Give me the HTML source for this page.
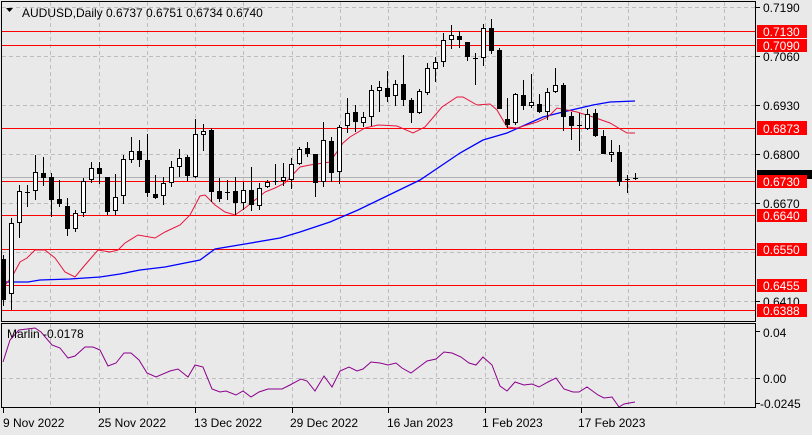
<!DOCTYPE html>
<html><head><meta charset="utf-8"><style>
html,body{margin:0;padding:0;background:#e9e9e9;}
svg{display:block;font-family:"Liberation Sans",sans-serif;}
</style></head><body>
<svg width="812" height="435" viewBox="0 0 812 435" xmlns="http://www.w3.org/2000/svg">
<rect x="0" y="0" width="812" height="435" fill="#e9e9e9"/>
<!-- grid -->
<g stroke="#bdbdbd" stroke-width="1" stroke-dasharray="4,3" shape-rendering="crispEdges">
<line x1="2" y1="7.5" x2="755" y2="7.5"/><line x1="2" y1="56.5" x2="755" y2="56.5"/><line x1="2" y1="105.5" x2="755" y2="105.5"/><line x1="2" y1="154.5" x2="755" y2="154.5"/><line x1="2" y1="203.5" x2="755" y2="203.5"/><line x1="2" y1="252.5" x2="755" y2="252.5"/><line x1="2" y1="301.5" x2="755" y2="301.5"/>
<line x1="2" y1="378.5" x2="755" y2="378.5"/>
<g>
<line x1="50.5" y1="2" x2="50.5" y2="407"/><line x1="99.5" y1="2" x2="99.5" y2="407"/><line x1="147.5" y1="2" x2="147.5" y2="407"/><line x1="195.5" y1="2" x2="195.5" y2="407"/><line x1="243.5" y1="2" x2="243.5" y2="407"/><line x1="292.5" y1="2" x2="292.5" y2="407"/><line x1="340.5" y1="2" x2="340.5" y2="407"/><line x1="388.5" y1="2" x2="388.5" y2="407"/><line x1="436.5" y1="2" x2="436.5" y2="407"/><line x1="485.5" y1="2" x2="485.5" y2="407"/><line x1="533.5" y1="2" x2="533.5" y2="407"/><line x1="581.5" y1="2" x2="581.5" y2="407"/><line x1="628.5" y1="2" x2="628.5" y2="407"/><line x1="676.5" y1="2" x2="676.5" y2="407"/><line x1="724.5" y1="2" x2="724.5" y2="407"/>
</g></g>
<!-- current price line -->
<line x1="2" y1="177.5" x2="755" y2="177.5" stroke="#b0b0b0" shape-rendering="crispEdges"/>
<!-- red levels -->
<g stroke="#ff0000" stroke-width="1" shape-rendering="crispEdges">
<line x1="2" y1="31.5" x2="755" y2="31.5"/><line x1="2" y1="45.5" x2="755" y2="45.5"/><line x1="2" y1="128.5" x2="755" y2="128.5"/><line x1="2" y1="181.5" x2="755" y2="181.5"/><line x1="2" y1="215.5" x2="755" y2="215.5"/><line x1="2" y1="249.5" x2="755" y2="249.5"/><line x1="2" y1="285.5" x2="755" y2="285.5"/><line x1="2" y1="310.5" x2="755" y2="310.5"/>
</g>
<!-- MAs -->
<polyline fill="none" stroke="#0000ff" stroke-width="1.3" points="2,282 28,282 40,280 70,279 100,277 120,274 140,270 165,267 200,260 215,249 245,244 280,238 300,232 330,222 358,210 420,180 460,153 483,140 507,133 543,117 563,112 593,105 610,102 635,101"/>
<polyline fill="none" stroke="#e8143c" stroke-width="1" points="3,288 13,275 20,262 27,258 35,250 45,250 55,258 65,272 75,277 85,265 98,250 110,252 118,250 125,243 138,235 155,238 165,232 180,225 190,215 200,196 205,195 215,205 225,212 235,215 245,208 255,200 265,192 275,188 285,183 300,167 310,165 330,162 343,143 350,137 365,128 378,125 397,126 413,133 425,127 442,107 457,97 463,97 477,105 490,104 497,110 507,127 517,128 537,122 548,117 557,108 577,112 593,117 610,123 627,133 635,133"/>
<!-- candles -->
<g stroke="#000" stroke-width="1" shape-rendering="crispEdges">
<g id="c">
<line x1="3.5" y1="255" x2="3.5" y2="306"/><rect x="1" y="259" width="5" height="41" fill="#000" stroke="none"/>
<line x1="11.5" y1="218" x2="11.5" y2="310"/><rect x="9.5" y="223.5" width="4" height="70" fill="#fff"/>
<line x1="19.5" y1="185" x2="19.5" y2="238"/><rect x="17.5" y="191.5" width="4" height="31" fill="#fff"/>
<line x1="27.5" y1="185" x2="27.5" y2="207"/><line x1="25" y1="192.5" x2="30" y2="192.5"/>
<line x1="35.5" y1="155" x2="35.5" y2="200"/><rect x="33.5" y="172.5" width="4" height="18" fill="#fff"/>
<line x1="43.5" y1="157" x2="43.5" y2="186"/><rect x="41" y="173" width="5" height="5" fill="#000" stroke="none"/>
<line x1="51.5" y1="173" x2="51.5" y2="217"/><rect x="49" y="177" width="5" height="23" fill="#000" stroke="none"/>
<line x1="59.5" y1="180" x2="59.5" y2="207"/><rect x="57" y="199" width="5" height="5" fill="#000" stroke="none"/>
<line x1="67.5" y1="198" x2="67.5" y2="236"/><rect x="65" y="206" width="5" height="23" fill="#000" stroke="none"/>
<line x1="75.5" y1="210" x2="75.5" y2="232"/><rect x="73.5" y="213.5" width="4" height="15" fill="#fff"/>
<line x1="83.5" y1="178" x2="83.5" y2="217"/><rect x="81.5" y="181.5" width="4" height="31" fill="#fff"/>
<line x1="91.5" y1="162" x2="91.5" y2="183"/><rect x="89.5" y="168.5" width="4" height="11" fill="#fff"/>
<line x1="99.5" y1="162" x2="99.5" y2="184"/><rect x="97" y="168" width="5" height="6" fill="#000" stroke="none"/>
<line x1="107.5" y1="177" x2="107.5" y2="215"/><rect x="105" y="177" width="5" height="35" fill="#000" stroke="none"/>
<line x1="115.5" y1="174" x2="115.5" y2="215"/><rect x="113.5" y="197.5" width="4" height="13" fill="#fff"/>
<line x1="123.5" y1="155" x2="123.5" y2="204"/><rect x="121.5" y="159.5" width="4" height="36" fill="#fff"/>
<line x1="131.5" y1="137" x2="131.5" y2="163"/><rect x="129.5" y="151.5" width="4" height="8" fill="#fff"/>
<line x1="139.5" y1="140" x2="139.5" y2="167"/><rect x="137" y="151" width="5" height="9" fill="#000" stroke="none"/>
<line x1="147.5" y1="134" x2="147.5" y2="197"/><rect x="145" y="160" width="5" height="33" fill="#000" stroke="none"/>
<line x1="155.5" y1="175" x2="155.5" y2="199"/><rect x="153" y="194" width="5" height="4" fill="#000" stroke="none"/>
<line x1="163.5" y1="177" x2="163.5" y2="205"/><rect x="161.5" y="183.5" width="4" height="12" fill="#fff"/>
<line x1="171.5" y1="161" x2="171.5" y2="187"/><rect x="169.5" y="167.5" width="4" height="15" fill="#fff"/>
<line x1="179.5" y1="149" x2="179.5" y2="177"/><rect x="177.5" y="158.5" width="4" height="8" fill="#fff"/>
<line x1="187.5" y1="155" x2="187.5" y2="181"/><rect x="185" y="157" width="5" height="19" fill="#000" stroke="none"/>
<line x1="195.5" y1="119" x2="195.5" y2="178"/><rect x="193.5" y="134.5" width="4" height="42" fill="#fff"/>
<line x1="203.5" y1="124" x2="203.5" y2="151"/><rect x="201.5" y="131.5" width="4" height="3" fill="#fff"/>
<line x1="211.5" y1="128" x2="211.5" y2="202"/><rect x="209" y="130" width="5" height="62" fill="#000" stroke="none"/>
<line x1="219.5" y1="178" x2="219.5" y2="202"/><rect x="217" y="191" width="5" height="8" fill="#000" stroke="none"/>
<line x1="227.5" y1="180" x2="227.5" y2="200"/><line x1="225" y1="192.5" x2="230" y2="192.5"/>
<line x1="235.5" y1="177" x2="235.5" y2="215"/><rect x="233" y="191" width="5" height="12" fill="#000" stroke="none"/>
<line x1="243.5" y1="182" x2="243.5" y2="210"/><rect x="241.5" y="190.5" width="4" height="12" fill="#fff"/>
<line x1="251.5" y1="167" x2="251.5" y2="211"/><rect x="249" y="190" width="5" height="15" fill="#000" stroke="none"/>
<line x1="259.5" y1="183" x2="259.5" y2="210"/><rect x="257.5" y="188.5" width="4" height="17" fill="#fff"/>
<line x1="267.5" y1="180" x2="267.5" y2="188"/><rect x="265.5" y="182.5" width="4" height="4" fill="#fff"/>
<line x1="275.5" y1="164" x2="275.5" y2="185"/><line x1="273" y1="181.5" x2="278" y2="181.5"/>
<line x1="283.5" y1="163" x2="283.5" y2="186"/><rect x="281.5" y="177.5" width="4" height="3" fill="#fff"/>
<line x1="291.5" y1="158" x2="291.5" y2="189"/><rect x="289.5" y="164.5" width="4" height="15" fill="#fff"/>
<line x1="299.5" y1="147" x2="299.5" y2="165"/><rect x="297.5" y="149.5" width="4" height="14" fill="#fff"/>
<line x1="307.5" y1="142" x2="307.5" y2="157"/><rect x="305" y="148" width="5" height="6" fill="#000" stroke="none"/>
<line x1="315.5" y1="154" x2="315.5" y2="197"/><rect x="313" y="154" width="5" height="29" fill="#000" stroke="none"/>
<line x1="323.5" y1="122" x2="323.5" y2="187"/><rect x="321.5" y="140.5" width="4" height="41" fill="#fff"/>
<line x1="331.5" y1="137" x2="331.5" y2="182"/><rect x="329" y="141" width="5" height="32" fill="#000" stroke="none"/>
<line x1="339.5" y1="125" x2="339.5" y2="184"/><rect x="337.5" y="127.5" width="4" height="44" fill="#fff"/>
<line x1="347.5" y1="98" x2="347.5" y2="133"/><rect x="345.5" y="113.5" width="4" height="12" fill="#fff"/>
<line x1="355.5" y1="105" x2="355.5" y2="132"/><rect x="353" y="112" width="5" height="10" fill="#000" stroke="none"/>
<line x1="363.5" y1="112" x2="363.5" y2="127"/><rect x="361.5" y="117.5" width="4" height="5" fill="#fff"/>
<line x1="371.5" y1="85" x2="371.5" y2="126"/><rect x="369.5" y="90.5" width="4" height="26" fill="#fff"/>
<line x1="379.5" y1="81" x2="379.5" y2="112"/><rect x="377.5" y="87.5" width="4" height="3" fill="#fff"/>
<line x1="387.5" y1="71" x2="387.5" y2="102"/><rect x="385" y="88" width="5" height="9" fill="#000" stroke="none"/>
<line x1="395.5" y1="80" x2="395.5" y2="106"/><rect x="393.5" y="84.5" width="4" height="11" fill="#fff"/>
<line x1="403.5" y1="55" x2="403.5" y2="106"/><rect x="401" y="84" width="5" height="16" fill="#000" stroke="none"/>
<line x1="411.5" y1="98" x2="411.5" y2="123"/><rect x="409" y="100" width="5" height="13" fill="#000" stroke="none"/>
<line x1="419.5" y1="89" x2="419.5" y2="114"/><rect x="417.5" y="91.5" width="4" height="21" fill="#fff"/>
<line x1="427.5" y1="63" x2="427.5" y2="95"/><rect x="425.5" y="68.5" width="4" height="24" fill="#fff"/>
<line x1="435.5" y1="57" x2="435.5" y2="82"/><rect x="433.5" y="62.5" width="4" height="6" fill="#fff"/>
<line x1="443.5" y1="33" x2="443.5" y2="67"/><rect x="441.5" y="40.5" width="4" height="21" fill="#fff"/>
<line x1="451.5" y1="25" x2="451.5" y2="49"/><rect x="449.5" y="35.5" width="4" height="4" fill="#fff"/>
<line x1="459.5" y1="31" x2="459.5" y2="48"/><rect x="457" y="36" width="5" height="4" fill="#000" stroke="none"/>
<line x1="467.5" y1="42" x2="467.5" y2="61"/><rect x="465" y="42" width="5" height="15" fill="#000" stroke="none"/>
<line x1="475.5" y1="53" x2="475.5" y2="85"/><line x1="473" y1="58.5" x2="478" y2="58.5"/>
<line x1="483.5" y1="24" x2="483.5" y2="66"/><rect x="481.5" y="28.5" width="4" height="29" fill="#fff"/>
<line x1="491.5" y1="19" x2="491.5" y2="54"/><rect x="489" y="28" width="5" height="23" fill="#000" stroke="none"/>
<line x1="499.5" y1="48" x2="499.5" y2="109"/><rect x="497" y="50" width="5" height="59" fill="#000" stroke="none"/>
<line x1="507.5" y1="98" x2="507.5" y2="128"/><rect x="505" y="119" width="5" height="6" fill="#000" stroke="none"/>
<line x1="515.5" y1="93" x2="515.5" y2="125"/><rect x="513.5" y="94.5" width="4" height="28" fill="#fff"/>
<line x1="523.5" y1="80" x2="523.5" y2="110"/><rect x="521" y="95" width="5" height="11" fill="#000" stroke="none"/>
<line x1="531.5" y1="74" x2="531.5" y2="108"/><rect x="529.5" y="102.5" width="4" height="3" fill="#fff"/>
<line x1="539.5" y1="94" x2="539.5" y2="113"/><rect x="537" y="104" width="5" height="8" fill="#000" stroke="none"/>
<line x1="547.5" y1="88" x2="547.5" y2="120"/><rect x="545.5" y="92.5" width="4" height="19" fill="#fff"/>
<line x1="555.5" y1="68" x2="555.5" y2="93"/><rect x="553.5" y="85.5" width="4" height="6" fill="#fff"/>
<line x1="563.5" y1="83" x2="563.5" y2="131"/><rect x="561" y="85" width="5" height="32" fill="#000" stroke="none"/>
<line x1="571.5" y1="112" x2="571.5" y2="140"/><rect x="569" y="116" width="5" height="10" fill="#000" stroke="none"/>
<line x1="579.5" y1="113" x2="579.5" y2="151"/><line x1="577" y1="125.5" x2="582" y2="125.5"/>
<line x1="587.5" y1="109" x2="587.5" y2="130"/><rect x="585.5" y="114.5" width="4" height="14" fill="#fff"/>
<line x1="595.5" y1="109" x2="595.5" y2="137"/><rect x="593" y="113" width="5" height="23" fill="#000" stroke="none"/>
<line x1="603.5" y1="130" x2="603.5" y2="154"/><rect x="601" y="136" width="5" height="18" fill="#000" stroke="none"/>
<line x1="611.5" y1="140" x2="611.5" y2="162"/><rect x="609.5" y="152.5" width="4" height="2" fill="#fff"/>
<line x1="619.5" y1="145" x2="619.5" y2="186"/><rect x="617" y="152" width="5" height="30" fill="#000" stroke="none"/>
<line x1="627.5" y1="175" x2="627.5" y2="193"/><line x1="625" y1="179.5" x2="630" y2="179.5"/>
<line x1="635.5" y1="173" x2="635.5" y2="180"/><line x1="633" y1="178.5" x2="638" y2="178.5"/>
</g></g>
<!-- indicator -->
<polyline fill="none" stroke="#8b008b" stroke-width="1" points="3,362 10,340 19,330 35,328 41,332 52,345 60,348 68,358 75,356 85,347 93,347 100,350 108,366 116,363 124,353 131,353 139,360 147,373 156,377 170,371 178,369 188,377 195,365 203,367 212,389 220,392 226,391 236,395 243,391 251,397 259,392 268,389 282,389 290,385 301,379 307,381 315,391 324,376 332,387 340,371 349,367 357,371 363,369 371,362 380,363 388,365 396,363 402,368 411,373 419,367 427,361 436,359 444,352 452,353 461,357 469,363 476,365 483,357 492,365 500,386 507,391 515,382 524,385 532,384 539,387 548,382 556,378 564,389 573,392 579,392 587,387 598,395 604,398 612,397 619,407 624,404 635,402"/>
<!-- frames -->
<g fill="none" stroke="#000" stroke-width="1" shape-rendering="crispEdges">
<rect x="1.5" y="1.5" width="754" height="320"/>
<rect x="1.5" y="323.5" width="754" height="84"/>
</g>
<!-- axis ticks -->
<g stroke="#000" shape-rendering="crispEdges">
<line x1="756" y1="7.5" x2="760" y2="7.5"/><line x1="756" y1="56.5" x2="760" y2="56.5"/><line x1="756" y1="105.5" x2="760" y2="105.5"/><line x1="756" y1="154.5" x2="760" y2="154.5"/><line x1="756" y1="203.5" x2="760" y2="203.5"/><line x1="756" y1="301.5" x2="760" y2="301.5"/>
<line x1="756" y1="331.5" x2="760" y2="331.5"/><line x1="756" y1="378.5" x2="760" y2="378.5"/><line x1="756" y1="403.5" x2="760" y2="403.5"/>
<line x1="3.5" y1="408" x2="3.5" y2="413"/><line x1="99.5" y1="408" x2="99.5" y2="413"/><line x1="195.5" y1="408" x2="195.5" y2="413"/><line x1="292.5" y1="408" x2="292.5" y2="413"/><line x1="388.5" y1="408" x2="388.5" y2="413"/><line x1="485.5" y1="408" x2="485.5" y2="413"/><line x1="581.5" y1="408" x2="581.5" y2="413"/>
</g>
<!-- axis labels -->
<g font-size="12" fill="#000">
<text x="763" y="12">0.7190</text>
<text x="763" y="61">0.7060</text>
<text x="763" y="110">0.6930</text>
<text x="763" y="159">0.6800</text>
<text x="763" y="208">0.6670</text>
<text x="763" y="306">0.6410</text>
<text x="763" y="337">0.04</text>
<text x="763" y="383">0.00</text>
<text x="760" y="408">-0.0245</text>
</g>
<rect x="757" y="170" width="55" height="9" fill="#000"/>
<g fill="#ff0000">
<rect x="757" y="25" width="50" height="13"/>
<rect x="757" y="39" width="50" height="13"/>
<rect x="757" y="121" width="50" height="14"/>
<rect x="757" y="175" width="50" height="13"/>
<rect x="757" y="209" width="50" height="13"/>
<rect x="757" y="243" width="50" height="13"/>
<rect x="757" y="279" width="50" height="13"/>
<rect x="757" y="304" width="50" height="13"/>
</g>
<g font-size="12" fill="#fff">
<text x="763" y="36">0.7130</text>
<text x="763" y="50">0.7090</text>
<text x="763" y="133">0.6873</text>
<text x="763" y="186">0.6730</text>
<text x="763" y="220">0.6640</text>
<text x="763" y="254">0.6550</text>
<text x="763" y="290">0.6455</text>
<text x="763" y="315">0.6388</text>
</g>
<!-- title -->
<path d="M6,8 L13,8 L9.5,12 Z" fill="#000"/>
<text x="22" y="17" font-size="12" fill="#000">AUDUSD,Daily  0.6737 0.6751 0.6734 0.6740</text>
<text x="7" y="338" font-size="12" fill="#000">Marlin -0.0178</text>
<!-- dates -->
<g font-size="12" fill="#000">
<text x="3" y="427">9 Nov 2022</text>
<text x="98" y="427">25 Nov 2022</text>
<text x="194" y="427">13 Dec 2022</text>
<text x="290" y="427">29 Dec 2022</text>
<text x="387" y="427">16 Jan 2023</text>
<text x="482" y="427">1 Feb 2023</text>
<text x="578" y="427">17 Feb 2023</text>
</g>
</svg>
</body></html>
